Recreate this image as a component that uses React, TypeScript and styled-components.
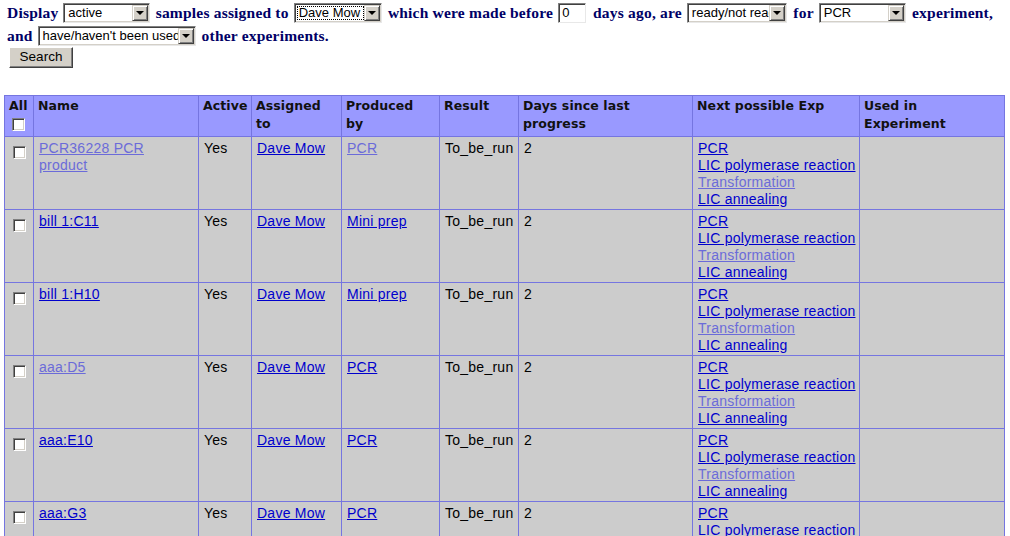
import React from "react";
import styled, { createGlobalStyle } from "styled-components";

const Global = createGlobalStyle`
  html, body { margin: 0; padding: 0; background: #fff; }
  body { font-family: "Liberation Sans", Arial, sans-serif; }
`;

const Page = styled.div`
  padding: 0 4px;
  width: 1002px;
  box-sizing: border-box;
`;

const Form = styled.div`
  padding: 1px 0 0 3px;
  font-family: "Liberation Serif", "Times New Roman", serif;
  font-weight: bold;
  font-size: 15.5px;
  color: #000066;
  line-height: 23px;
`;

const Line = styled.div`
  display: flex;
  align-items: center;
  height: 23px;
  white-space: nowrap;
`;

const Word = styled.span`
  margin: 0 5px 0 0;
  letter-spacing: 0.2px;
`;

const SelectBox = styled.span<{ $w: number }>`
  display: inline-flex;
  align-items: stretch;
  box-sizing: border-box;
  width: ${(p) => p.$w}px;
  height: 20px;
  margin-right: 6px;
  background: #fff;
  border-top: 1px solid #808080;
  border-left: 1px solid #808080;
  border-right: 1px solid #e8e8e8;
  border-bottom: 1px solid #e8e8e8;
  box-shadow: inset 1px 1px 0 #404040, inset -1px -1px 0 #d4d0c8;
  padding: 2px;
  font-family: "Liberation Sans", Arial, sans-serif;
  font-weight: normal;
  font-size: 13px;
  color: #000;
  overflow: hidden;
`;

const SelectText = styled.span<{ $focus?: boolean }>`
  flex: 1;
  min-width: 0;
  overflow: hidden;
  line-height: 14px;
  padding-left: 2px;
  white-space: nowrap;
  outline: ${(p) => (p.$focus ? "1px dotted #000" : "none")};
  outline-offset: -1px;
`;

const Arrow = styled.span`
  width: 16px;
  flex: none;
  background: #d4d0c8;
  box-sizing: border-box;
  border-top: 1px solid #d4d0c8;
  border-left: 1px solid #d4d0c8;
  border-right: 1px solid #404040;
  border-bottom: 1px solid #404040;
  box-shadow: inset 1px 1px 0 #fff, inset -1px -1px 0 #808080;
  margin: -1px -1px -1px 0;
  display: flex;
  align-items: center;
  justify-content: center;
  &::after {
    content: "";
    border-left: 4px solid transparent;
    border-right: 4px solid transparent;
    border-top: 4px solid #000;
    margin-top: 1px;
  }
`;

const TextInput = styled.span`
  display: inline-block;
  box-sizing: border-box;
  width: 29px;
  height: 20px;
  margin-right: 7px;
  background: #fff;
  border-top: 1px solid #808080;
  border-left: 1px solid #808080;
  border-right: 1px solid #e8e8e8;
  border-bottom: 1px solid #e8e8e8;
  box-shadow: inset 1px 1px 0 #404040;
  padding: 2px 3px;
  font-family: "Liberation Sans", Arial, sans-serif;
  font-weight: normal;
  font-size: 13px;
  line-height: 14px;
  color: #000;
`;

const Button = styled.span`
  display: block;
  box-sizing: border-box;
  width: 64px;
  height: 21px;
  margin-left: 2px;
  margin-top: 0;
  background: #d4d0c8;
  border-top: 1px solid #fff;
  border-left: 1px solid #fff;
  border-right: 1px solid #404040;
  border-bottom: 1px solid #404040;
  box-shadow: inset -1px -1px 0 #808080;
  font-family: "Liberation Sans", Arial, sans-serif;
  font-weight: normal;
  font-size: 13.5px;
  line-height: 18px;
  text-align: center;
  color: #000;
`;

const Table = styled.table`
  margin-top: 27px;
  width: 1000px;
  table-layout: fixed;
  border-collapse: collapse;
  font-family: "Liberation Sans", Arial, sans-serif;
  font-size: 14px;
  letter-spacing: 0.25px;
  color: #000;
`;

const Th = styled.th`
  background: #9999ff;
  border: 1px solid #7575e0;
  text-align: left;
  vertical-align: top;
  padding: 1px 4px 3px;
  font-family: "DejaVu Sans", Verdana, sans-serif;
  font-size: 12.5px;
  font-weight: bold;
  line-height: 18px;
  letter-spacing: 0.1px;
  color: #111;
`;

const Td = styled.td`
  background: #cccccc;
  border: 1px solid #7575e0;
  vertical-align: top;
  padding: 3px 4px 1px 5px;
  line-height: 17px;
  height: 68px;
`;

const A = styled.a<{ $visited?: boolean }>`
  color: ${(p) => (p.$visited ? "#6b6bd9" : "#0000cc")};
  text-decoration: underline;
  cursor: pointer;
`;

const Stack = styled.div`
  display: flex;
  flex-direction: column;
  align-items: flex-start;
  white-space: nowrap;
`;

const Check = styled.span<{ $top?: number }>`
  display: block;
  width: 13px;
  height: 13px;
  box-sizing: border-box;
  margin: ${(p) => p.$top ?? 6}px 0 0 3px;
  background: #fff;
  border-top: 1px solid #808080;
  border-left: 1px solid #808080;
  border-right: 1px solid #fff;
  border-bottom: 1px solid #fff;
  box-shadow: inset 1px 1px 0 #404040, inset -1px -1px 0 #d4d0c8;
`;

type Row = {
  name: string;
  nameVisited: boolean;
  produced: string;
  producedVisited: boolean;
};

const rows: Row[] = [
  { name: "PCR36228 PCR product", nameVisited: true, produced: "PCR", producedVisited: true },
  { name: "bill 1:C11", nameVisited: false, produced: "Mini prep", producedVisited: false },
  { name: "bill 1:H10", nameVisited: false, produced: "Mini prep", producedVisited: false },
  { name: "aaa:D5", nameVisited: true, produced: "PCR", producedVisited: false },
  { name: "aaa:E10", nameVisited: false, produced: "PCR", producedVisited: false },
  { name: "aaa:G3", nameVisited: false, produced: "PCR", producedVisited: false },
];

const colWidths = [29, 165, 53, 90, 98, 79, 174, 167, 145];

function Select({ w, text, focus }: { w: number; text: string; focus?: boolean }) {
  return (
    <SelectBox $w={w}>
      <SelectText $focus={focus}>{text}</SelectText>
      <Arrow />
    </SelectBox>
  );
}

export default function App() {
  return (
    <>
      <Global />
      <Page>
        <Form>
          <Line>
            <Word>Display</Word>
            <Select w={91} text="active" />
            <Word>samples assigned to</Word>
            <Select w={93} text="Dave Mow" focus />
            <Word>which were made before</Word>
            <TextInput>0</TextInput>
            <Word>days ago, are</Word>
            <Select w={106} text="ready/not ready" />
            <Word>for</Word>
            <Select w={92} text="PCR" />
            <Word>experiment,</Word>
          </Line>
          <Line>
            <Word>and</Word>
            <Select w={158} text="have/haven't been used" />
            <Word>other experiments.</Word>
          </Line>
          <Button>Search</Button>
        </Form>
        <Table>
          <colgroup>
            {colWidths.map((w, i) => (
              <col key={i} style={{ width: w }} />
            ))}
          </colgroup>
          <thead>
            <tr>
              <Th>
                All
                <Check $top={3} />
              </Th>
              <Th>Name</Th>
              <Th>Active</Th>
              <Th>
                Assigned
                <br />
                to
              </Th>
              <Th>
                Produced
                <br />
                by
              </Th>
              <Th>Result</Th>
              <Th>
                Days since last
                <br />
                progress
              </Th>
              <Th>Next possible Exp</Th>
              <Th>
                Used in
                <br />
                Experiment
              </Th>
            </tr>
          </thead>
          <tbody>
            {rows.map((r) => (
              <tr key={r.name}>
                <Td>
                  <Check />
                </Td>
                <Td>
                  <A $visited={r.nameVisited}>{r.name}</A>
                </Td>
                <Td>Yes</Td>
                <Td>
                  <A>Dave Mow</A>
                </Td>
                <Td>
                  <A $visited={r.producedVisited}>{r.produced}</A>
                </Td>
                <Td>To_be_run</Td>
                <Td>2</Td>
                <Td>
                  <Stack>
                    <A>PCR</A>
                    <A>LIC polymerase reaction</A>
                    <A $visited>Transformation</A>
                    <A>LIC annealing</A>
                  </Stack>
                </Td>
                <Td />
              </tr>
            ))}
          </tbody>
        </Table>
      </Page>
    </>
  );
}
